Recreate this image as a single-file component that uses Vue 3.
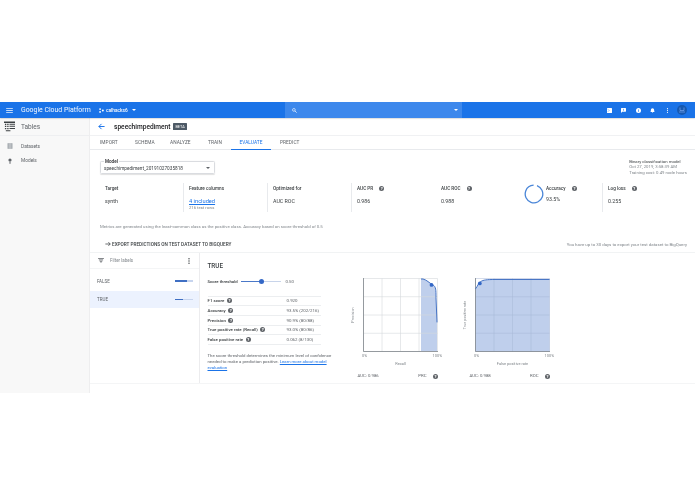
<script setup>
const tabs = ['IMPORT', 'SCHEMA', 'ANALYZE', 'TRAIN', 'EVALUATE', 'PREDICT']
const metrics = [
  { label: 'Target', value: 'synth' },
  { label: 'Feature columns', value: '4 included', sub: '216 test rows', link: true },
  { label: 'Optimized for', value: 'AUC ROC' },
  { label: 'AUC PR', value: '0.986', help: true, plain: true },
  { label: 'AUC ROC', value: '0.988', help: true, plain: true },
]
const rows = [
  { k: 'F1 score', v: '0.920' },
  { k: 'Accuracy', v: '93.5% (202/216)' },
  { k: 'Precision', v: '90.9% (80/88)' },
  { k: 'True positive rate (Recall)', v: '93.0% (80/86)' },
  { k: 'False positive rate', v: '0.062 (8/130)' },
]
const grid = [0, 18.5, 37, 55.5, 74]
</script>

<template>
  <div class="page">
    <header class="topbar">
      <svg class="burger" viewBox="0 0 8 6"><path d="M0 .5h8M0 3h8M0 5.500h8" stroke="#fff" stroke-width=".9" /></svg>
      <span class="brand">Google Cloud Platform</span>
      <svg class="proj" viewBox="0 0 6 6"><circle cx="1.300" cy="1.300" r="1.100" fill="#fff" /><circle cx="1.300" cy="4.700" r="1.100" fill="#fff" /><circle cx="4.600" cy="3" r="1.200" fill="#fff" /></svg>
      <span class="project">calhacks6</span>
      <span class="caret white"></span>
      <div class="search">
        <svg class="mag" viewBox="0 0 8 8"><circle cx="3" cy="3" r="2.200" fill="none" stroke="#fff" stroke-width="1" /><path d="M4.700 4.700 7.500 7.500" stroke="#fff" stroke-width="1.100" /></svg>
        <span class="caret white small"></span>
      </div>
      <div class="actions">
        <svg viewBox="0 0 6 6"><rect width="6" height="6" rx=".6" fill="#fff" /><path d="M1 1.500 2.500 3 1 4.500" stroke="#1a73e8" stroke-width=".6" fill="none" /></svg>
        <svg viewBox="0 0 6 6"><path d="M.5 0h5a.5.5 0 0 1 .5.500v3.500a.5.5 0 0 1-.5.500H1.500L0 6V.5A.5.5 0 0 1 .5 0Z" fill="#fff" /><rect x="2.700" y="1" width=".7" height="2.300" fill="#1a73e8" /></svg>
        <svg viewBox="0 0 6 6"><circle cx="3" cy="3" r="3" fill="#fff" /><rect x="2.600" y="2.400" width=".8" height="2.200" fill="#1a73e8" /><rect x="2.600" y="1.200" width=".8" height=".7" fill="#1a73e8" /></svg>
        <svg viewBox="0 0 6 6"><path d="M3 .3a2 2 0 0 1 2 2v1.700l.7.7H.3l.7-.7V2.300a2 2 0 0 1 2-2ZM2.300 5.100h1.400a.7.7 0 0 1-1.400 0Z" fill="#fff" /></svg>
        <svg viewBox="0 0 6 6"><circle cx="3" cy=".8" r=".7" fill="#fff" /><circle cx="3" cy="3" r=".7" fill="#fff" /><circle cx="3" cy="5.200" r=".7" fill="#fff" /></svg>
        <span class="avatar"><svg viewBox="0 0 6 6"><path d="M1 .5v3h4v-3M0 5h6" stroke="#8ab4f8" stroke-width=".6" fill="none" /></svg></span>
      </div>
    </header>

    <div class="body">
      <aside class="side">
        <div class="side-head">
          <svg class="tables-ic" viewBox="0 0 12 12"><path d="M0 .5h12v1.600H0ZM1 3h1.500v1.300H1Zm2.500 0h1.500v1.300H3.500ZM1 5.300h1.500v1.300H1Zm2.500 0h1.500v1.300H3.500ZM1 7.600h1.500v1.300H1Zm2.500 0h1.500v1.300H3.500ZM6 3h6v1H6Zm0 2.300h6v1H6Zm0 2.300h6v1H6ZM2 10h5v1.200H2Z" fill="#3c4043" /></svg>
          <span>Tables</span>
        </div>
        <nav class="side-nav">
          <a><svg viewBox="0 0 6 6"><rect x=".5" y=".3" width="5" height="5.400" fill="#9aa0a6" /><path d="M.5 2h5M.5 4h5M3 .3v5.400" stroke="#f8f9fa" stroke-width=".4" /></svg>Datasets</a>
          <a><svg viewBox="0 0 6 6"><circle cx="3" cy="2" r="1.600" fill="#5f6368" /><rect x="2.500" y="3.500" width="1" height="2.300" fill="#5f6368" /></svg>Models</a>
        </nav>
      </aside>

      <main class="main">
        <div class="title-row">
          <svg class="back" viewBox="0 0 8 8"><path d="M7.500 4H1M4 1 1 4l3 3" fill="none" stroke="#1a73e8" stroke-width="1.100" /></svg>
          <span class="title">speechimpediment</span>
          <span class="beta">BETA</span>
        </div>
        <div class="tabs">
          <span v-for="t in tabs" :key="t" class="tab" :class="{ active: t === 'EVALUATE' }">{{ t }}</span>
        </div>

        <div class="model-row">
          <div class="select">
            <span class="select-label">Model</span>
            <span class="select-val">speechimpediment_20191027035818</span>
            <span class="caret dark"></span>
          </div>
          <div class="model-meta">
            <div>Binary classification model</div>
            <div class="soft">Oct 27, 2019, 3:58:39 AM</div>
            <div class="soft">Training cost: 0.49 node hours</div>
          </div>
        </div>

        <div class="metrics">
          <div v-for="m in metrics" :key="m.label" class="metric" :class="{ plain: m.plain }">
            <div class="m-label">{{ m.label }}<span v-if="m.help" class="help">?</span></div>
            <div class="m-value" :class="{ link: m.link }">{{ m.value }}</div>
            <div v-if="m.sub" class="m-sub">{{ m.sub }}</div>
          </div>
          <div class="metric acc">
            <svg class="ring" viewBox="0 0 20 20"><circle cx="10" cy="10" r="8.800" fill="none" stroke="#4a86d8" stroke-width="1.300" stroke-dasharray="51.500 3.800" transform="rotate(-70 10 10)" /></svg>
            <div>
              <div class="m-label">Accuracy<span class="help wide">?</span></div>
              <div class="m-value acc-v">93.5%</div>
            </div>
          </div>
          <div class="metric last">
            <div class="m-label">Log loss<span class="help">?</span></div>
            <div class="m-value">0.255</div>
          </div>
        </div>

        <p class="note">Metrics are generated using the least-common class as the positive class. Accuracy based on score threshold of 0.5</p>

        <div class="export">
          <span class="export-link"><svg viewBox="0 0 8 8"><path d="M.5 4H7M4.500 1.500 7 4 4.500 6.500" fill="none" stroke="#3c4043" stroke-width="1" /></svg>EXPORT PREDICTIONS ON TEST DATASET TO BIGQUERY</span>
          <span class="export-note">You have up to 30 days to export your test dataset to BigQuery</span>
        </div>

        <section class="panel">
          <div class="labels">
            <div class="filter">
              <svg viewBox="0 0 7 6"><path d="M0 .5h7M1 2.300h5M2 4h3M3 5.500h1" stroke="#5f6368" stroke-width="1" /></svg>
              <span>Filter labels</span>
              <svg class="kebab" viewBox="0 0 2 6"><circle cx="1" cy=".8" r=".7" fill="#3c4043" /><circle cx="1" cy="3" r=".7" fill="#3c4043" /><circle cx="1" cy="5.200" r=".7" fill="#3c4043" /></svg>
            </div>
            <div class="label-row"><span>FALSE</span><i class="bar"><b class="w65"></b></i></div>
            <div class="label-row on"><span>TRUE</span><i class="bar"><b class="w45"></b></i></div>
          </div>

          <div class="detail">
            <div class="stats">
              <h2>TRUE</h2>
              <div class="threshold">
                <span class="th-label">Score threshold</span>
                <span class="slider"><i class="thumb"></i></span>
                <span class="th-val">0.50</span>
              </div>
              <div class="table">
                <div v-for="r in rows" :key="r.k" class="t-row">
                  <span class="t-k">{{ r.k }}<span class="help">?</span></span>
                  <span class="t-v">{{ r.v }}</span>
                </div>
              </div>
              <p class="explain">The score threshold determines the minimum level of confidence needed to make a prediction positive. <a>Learn more about model</a> <a>evaluation</a></p>
            </div>

            <div class="charts">
              <figure class="chart">
                <div class="plot-wrap">
                  <span class="y-title">Precision</span>
                  <svg class="plot" viewBox="0 0 75 75" preserveAspectRatio="none">
                    <path d="M58 1H60C64 2 66 5 70 7C73 9 73 12 73 20L74 45V74H58Z" fill="#bfcfec" />
                    <path v-for="g in grid" :key="'h' + g" :d="`M.5 ${g + .5}H74.500`" stroke="#d5d8dc" stroke-width=".6" />
                    <path v-for="g in grid" :key="'v' + g" :d="`M${g + .5} .5V74.500`" stroke="#d5d8dc" stroke-width=".6" />
                    <path d="M.5 0V74.500H75" fill="none" stroke="#80868b" stroke-width=".8" />
                    <path d="M58 1H60C64 2 66 5 70 7C73 9 73 12 73 20L74 45" fill="none" stroke="#4472c4" stroke-width="1" />
                    <circle cx="68.500" cy="7" r="1.900" fill="#3367c6" />
                  </svg>
                </div>
                <div class="ticks"><span>0%</span><span>100%</span></div>
                <div class="x-title">Recall</div>
                <div class="auc"><span>AUC: 0.986</span><span class="auc-r">PRC<i class="help">?</i></span></div>
              </figure>
              <figure class="chart">
                <div class="plot-wrap">
                  <span class="y-title">True positive rate</span>
                  <svg class="plot" viewBox="0 0 75 75" preserveAspectRatio="none">
                    <path d="M.5 11C3 8 3 5 6 3.500C8 2 12 1.500 20 1.500H74.500V74.500H.5Z" fill="#bfcfec" />
                    <path v-for="g in grid" :key="'h' + g" :d="`M.5 ${g + .5}H74.500`" stroke="#a8b8d6" stroke-width=".5" />
                    <path v-for="g in grid" :key="'v' + g" :d="`M${g + .5} .5V74.500`" stroke="#a8b8d6" stroke-width=".5" />
                    <path d="M.5 0V74.500H75" fill="none" stroke="#80868b" stroke-width=".8" />
                    <path d="M.5 11C3 8 3 5 6 3.500C8 2 12 1.500 20 1.500H74.500" fill="none" stroke="#4472c4" stroke-width="1" />
                    <circle cx="4.800" cy="5.500" r="1.900" fill="#3367c6" />
                  </svg>
                </div>
                <div class="ticks"><span>0%</span><span>100%</span></div>
                <div class="x-title">False positive rate</div>
                <div class="auc"><span>AUC: 0.988</span><span class="auc-r">ROC<i class="help">?</i></span></div>
              </figure>
            </div>
          </div>
        </section>
      </main>
    </div>
  </div>
</template>

<style>
html, body { margin: 0; background: #fff; }
</style>

<style scoped>
.page { width: 695px; height: 494px; padding-top: 102px; box-sizing: border-box; background: #fff; font-family: Roboto, "Liberation Sans", sans-serif; color: #3c4043; overflow: hidden; filter: blur(.35px); }

.topbar { height: 16px; background: #1a73e8; display: flex; align-items: center; color: #fff; box-shadow: 0 .5px 1.500px rgba(0,0,0,.3); position: relative; z-index: 1; }
.burger { width: 7px; height: 5px; margin-left: 6px; }
.brand { margin-left: 8px; width: 78px; font-size: 6.900px; white-space: nowrap; opacity: .95; }
.proj { width: 5px; height: 5px; }
.project { margin-left: 2px; font-size: 4.800px; width: 26px; font-weight: 500; }
.caret { width: 0; height: 0; border-left: 2px solid transparent; border-right: 2px solid transparent; border-top: 2px solid #5f6368; }
.caret.white { border-top-color: #fff; }
.search { margin-left: 149px; width: 177px; height: 16px; background: #3d88ec; display: flex; align-items: center; justify-content: space-between; padding: 0 4px 0 7px; box-sizing: border-box; }
.mag { width: 5px; height: 5px; }
.actions { margin-left: 144.500px; display: flex; align-items: center; gap: 9.500px; }
.actions > svg { width: 5px; height: 5px; }
.avatar { width: 10px; height: 10px; border-radius: 50%; background: #1558b0; display: flex; align-items: center; justify-content: center; margin-left: -2.500px; }
.avatar svg { width: 6px; height: 6px; }

.body { display: flex; height: 275px; background: #fff; }
.side { width: 90px; background: #f8f8f8; border-right: 1px solid #eeeeef; box-sizing: border-box; flex: none; }
.side-head { height: 18px; display: flex; align-items: center; gap: 6px; padding-left: 4px; font-size: 6.500px; color: #5f6368; border-bottom: 1px solid #eeeff1; box-sizing: border-box; }
.tables-ic { width: 11px; height: 11px; }
.side-nav { padding-top: 3px; }
.side-nav a { display: flex; align-items: center; height: 14.500px; padding-left: 7px; gap: 8px; font-size: 4.800px; color: #5f6368; }
.side-nav svg { width: 6px; height: 6px; }

.main { flex: 1; min-width: 0; }
.title-row { height: 18px; display: flex; align-items: center; padding-left: 8px; border-bottom: 1px solid #f0f1f3; box-sizing: border-box; }
.back { width: 7px; height: 7px; }
.title { margin-left: 9px; font-size: 6.600px; font-weight: 500; color: #202124; }
.beta { margin-left: 3px; background: #4e5a66; color: #fff; font-size: 3.800px; padding: 1px 2px; border-radius: .5px; }
.tabs { height: 14px; display: flex; align-items: center; border-bottom: 1px solid #e8eaed; box-sizing: border-box; padding-left: 10px; }
.tab { font-size: 4.800px; color: #5f6368; height: 14px; line-height: 14px; width: 35px; flex: none; letter-spacing: .05px; }
.tab:nth-child(3) { width: 38px; }
.tab:nth-child(4) { width: 23px; }
.tab.active { color: #1a73e8; width: 40px; text-align: center; border-bottom: 1px solid #1a73e8; margin-right: 9px; box-sizing: border-box; }

.model-row { display: flex; justify-content: space-between; padding: 9px 8px 0 10px; height: 33px; box-sizing: border-box; }
.select { position: relative; width: 115px; height: 13px; margin-top: 2px; border: .5px solid #dadce0; border-radius: 1.500px; box-sizing: border-box; display: flex; align-items: center; justify-content: space-between; padding: 1px 4px 0 3px; box-shadow: 0 .5px 1px rgba(0,0,0,.12); }
.select-label { position: absolute; top: -3px; left: 3px; background: #fff; font-size: 4.600px; font-weight: 500; color: #202124; padding: 0 1px; line-height: 5px; }
.select-val { font-size: 4.700px; color: #3c4043; }
.model-meta { font-size: 4.300px; line-height: 5.500px; color: #3c4043; margin-top: -.5px; }
.soft { color: #80868b; }

.metrics { display: flex; height: 29px; padding-left: 10px; }
.metric { width: 84px; flex: none; box-sizing: border-box; padding-left: 5px; border-right: .5px solid #e8eaed; padding-top: 2.500px; }
.metric.plain { border-right: none; }
.metric.acc { width: 80.500px; display: flex; align-items: flex-start; gap: 2px; border-right: .5px solid #e8eaed; padding-left: 2px; margin-left: 2px; padding-top: 1px; }
.metric.last { border-right: none; padding-left: 5.500px; }
.ring { width: 20px; height: 20px; flex: none; }
.m-label { font-size: 4.700px; font-weight: 500; color: #3c4043; display: flex; align-items: center; height: 6px; }
.acc .m-label { margin-top: 1.500px; }
.m-value { margin-top: 6.500px; font-size: 5.300px; color: #3c4043; line-height: 7px; }
.acc-v { margin-top: 4.500px; }
.m-value.link { color: #1a73e8; text-decoration: underline; font-size: 5.700px; }
.m-sub { font-size: 4.200px; color: #80868b; line-height: 5px; }
.help { display: inline-flex; width: 5px; height: 5px; border-radius: 50%; background: #5f6368; color: #fff; font-size: 4px; font-weight: 700; line-height: 5px; align-items: center; justify-content: center; margin-left: 6px; font-style: normal; flex: none; }
.help.wide { margin-left: 6.500px; }

.note { margin: 12px 0 0; padding-left: 10px; font-size: 4.330px; color: #80868b; line-height: 5px; }
.export { display: flex; justify-content: space-between; align-items: center; padding: 0 8px 0 15px; height: 8px; margin-top: 11px; }
.export-link { display: flex; align-items: center; gap: 1px; font-size: 4.700px; font-weight: 500; color: #3c4043; }
.export-link svg { width: 6px; height: 6px; }
.export-note { font-size: 4.360px; color: #80868b; }

.panel { display: flex; margin-top: 4px; border-top: 1.500px solid #f1f3f4; height: 130px; border-bottom: 1px solid #f4f5f6; box-sizing: content-box; }
.labels { width: 110px; flex: none; border-right: .5px solid #ececee; box-sizing: border-box; }
.filter { height: 16px; display: flex; align-items: center; padding: 0 7px 0 8px; font-size: 4.500px; color: #80868b; gap: 6px; border-bottom: 1px solid #f4f5f6; box-sizing: border-box; }
.filter > svg:first-child { width: 6px; height: 5px; }
.kebab { width: 2px; height: 6px; margin-left: auto; margin-right: 2px; }
.label-row { height: 20px; display: flex; align-items: center; justify-content: space-between; padding: 0 6px 0 7px; font-size: 4.500px; color: #5f6368; }
.label-row:nth-child(2) { margin-top: 2px; }
.label-row.on { background: #ecf2fe; height: 17px; }
.bar { display: block; width: 18px; height: 1.200px; background: #c6d4ee; }
.bar b { display: block; height: 100%; background: #3f6fc3; }
.w65 { width: 65%; }
.w45 { width: 45%; }

.detail { flex: 1; display: flex; min-width: 0; }
.stats { width: 134px; flex: none; padding-left: 7.500px; box-sizing: border-box; }
h2 { margin: 9.500px 0 0; font-size: 6.300px; font-weight: 500; color: #3c4043; line-height: 7px; }
.threshold { display: flex; align-items: center; margin-top: 8px; height: 7px; }
.th-label { width: 33.500px; font-size: 4.300px; font-weight: 500; flex: none; white-space: nowrap; }
.slider { position: relative; display: block; width: 40px; height: 1px; background: linear-gradient(90deg, #4a78c8 50%, #c8d4ea 50%); }
.thumb { position: absolute; left: 18px; top: -2px; width: 5px; height: 5px; border-radius: 50%; background: #3367c6; }
.th-val { margin-left: 4.500px; font-size: 4.300px; color: #5f6368; }
.table { margin-top: 11px; width: 113px; border-top: .5px solid #eceef0; }
.t-row { display: flex; height: 9.700px; align-items: center; border-bottom: .5px solid #eceef0; box-sizing: border-box; }
.t-k { width: 79px; flex: none; font-size: 4.400px; font-weight: 500; color: #3c4043; display: flex; align-items: center; }
.t-k .help { margin-left: 2.500px; }
.t-v { font-size: 4.400px; color: #5f6368; }
.explain { margin: 8.500px 0 0; width: 126px; font-size: 4.300px; line-height: 6px; color: #5f6368; }
.explain a { color: #1a73e8; text-decoration: underline; }

.charts { display: flex; padding-left: 29px; gap: 37px; padding-top: 24.500px; }
.chart { margin: 0; width: 75px; flex: none; }
.plot-wrap { position: relative; }
.plot { display: block; width: 75px; height: 74px; }
.y-title { position: absolute; left: -10px; top: 37px; font-size: 3.700px; color: #80868b; transform: translate(-50%, -50%) rotate(-90deg); white-space: nowrap; }
.ticks { display: flex; justify-content: space-between; font-size: 3.900px; color: #80868b; margin: 1.500px -4px 0 -1px; line-height: 5px; }
.x-title { text-align: center; font-size: 3.900px; color: #80868b; margin-top: 3px; line-height: 5px; }
.auc { display: flex; justify-content: space-between; align-items: center; margin: 7px 0 0 -5.500px; font-size: 4.300px; color: #5f6368; line-height: 6px; }
.auc-r { display: flex; align-items: center; }
.auc-r .help { margin-left: 6.500px; }
</style>
